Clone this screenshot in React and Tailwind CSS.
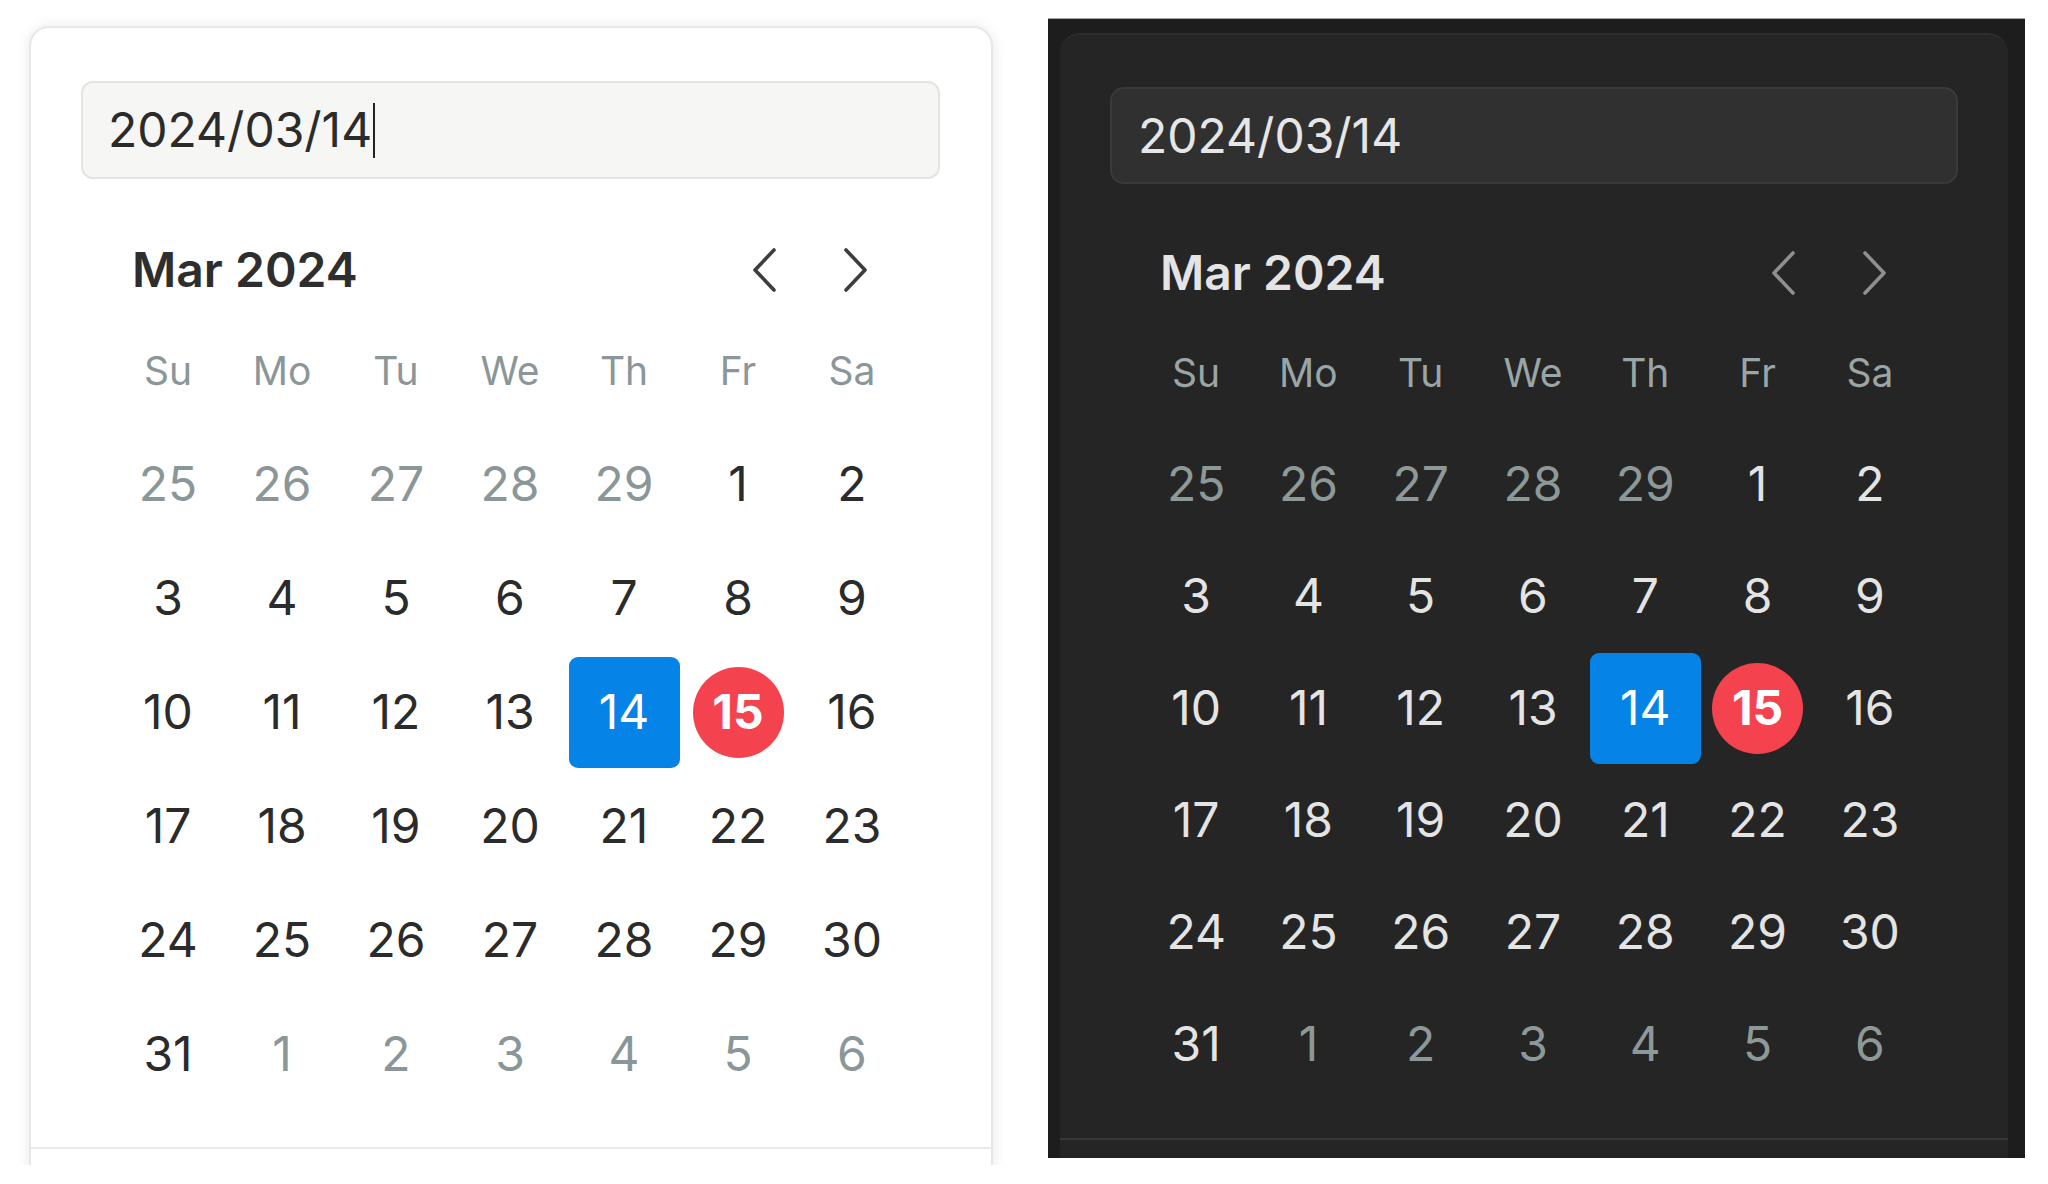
const weekdays = ['Su', 'Mo', 'Tu', 'We', 'Th', 'Fr', 'Sa']

// March 2024 grid, leading/trailing days flagged as outside
const days = [
  ...[25, 26, 27, 28, 29].map((d) => ({ d, out: true })),
  ...Array.from({ length: 31 }, (_, i) => ({ d: i + 1, out: false })),
  ...[1, 2, 3, 4, 5, 6].map((d) => ({ d, out: true })),
]

const themes = {
  light: {
    input: 'ml-[50px] mr-[51px] mt-[53px] h-[98px] rounded-[12px] border-2 border-[#e4e4e3] bg-[#f6f6f5] pl-[25px] text-[#2b2b2b]',
    title: 'text-[#2e2e2e]',
    header: 'mt-[61px] h-[60px] pl-[101px] pr-[120px]',
    grid: 'ml-[80px] mr-[82px] mt-[13px] auto-rows-[114px]',
    week: 'text-[#8a9697]',
    day: 'text-[#2b2b2b]',
    out: 'text-[#8a9697]',
    chevron: '#3d3d3d',
    divider: 'mt-[36px] border-[#e9e9e9]',
    caret: true,
  },
  dark: {
    input: 'ml-[50px] mr-[50px] mt-[52px] h-[97px] rounded-[14px] border-2 border-[#3a3a3a] bg-[#303030] pl-[26px] text-[#e6e6e6]',
    title: 'text-[#e4e4e4]',
    header: 'mt-[59px] h-[60px] pl-[100px] pr-[118px]',
    grid: 'ml-[80px] mr-[82px] mt-[13px] auto-rows-[112px]',
    week: 'text-[#9aa6a6]',
    day: 'text-[#e4e4e4]',
    out: 'text-[#8d9999]',
    chevron: '#8f8f8f',
    divider: 'mt-[38px] border-[#383838]',
    caret: false,
  },
}

function Chevron({ dir, color }) {
  return (
    <svg width="30" height="46" viewBox="0 0 30 46" fill="none">
      <path
        d={dir === 'left' ? 'M25 3 L6 23 L25 43' : 'M5 3 L24 23 L5 43'}
        stroke={color}
        strokeWidth="3.6"
        strokeLinecap="round"
        strokeLinejoin="round"
      />
    </svg>
  )
}

function Calendar({ mode }) {
  const t = themes[mode]
  return (
    <div className="font-['Inter',sans-serif]">
      <div className={`flex items-center text-[48px] leading-none ${t.input}`}>
        <span>2024/03/14</span>
        {t.caret && <span className="ml-[1px] h-[55px] w-[2px] bg-[#222]" />}
      </div>

      <div className={`flex items-center justify-between ${t.header}`}>
        <span className={`text-[48px] font-semibold leading-none ${t.title}`}>Mar 2024</span>
        <div className="flex items-center gap-[62px]">
          <Chevron dir="left" color={t.chevron} />
          <Chevron dir="right" color={t.chevron} />
        </div>
      </div>

      <div className={`grid grid-cols-7 ${t.grid}`}>
        {weekdays.map((w) => (
          <div key={w} className={`flex items-center justify-center text-[39px] leading-none ${t.week}`}>
            {w}
          </div>
        ))}
        {days.map((item, i) => {
          const selected = !item.out && item.d === 14
          const today = !item.out && item.d === 15
          return (
            <div key={i} className="flex items-center justify-center">
              {selected ? (
                <span className="flex h-[111px] w-[111px] items-center justify-center rounded-[9px] bg-[#0683e6] text-[48px] leading-none text-white">
                  14
                </span>
              ) : today ? (
                <span className="flex h-[91px] w-[91px] items-center justify-center rounded-full bg-[#f4434f] text-[48px] font-bold leading-none text-white">
                  15
                </span>
              ) : (
                <span className={`text-[48px] leading-none ${item.out ? t.out : t.day}`}>{item.d}</span>
              )}
            </div>
          )
        })}
      </div>

      <div className={`border-t-2 ${t.divider}`} />
    </div>
  )
}

export default function App() {
  return (
    <div className="flex h-[1184px] w-[2048px] items-start overflow-hidden bg-white">
      <div className="h-[1165px] w-[1048px] shrink-0 overflow-hidden pl-[29px] pr-[55px] pt-[26px]">
        <div className="h-[1200px] rounded-t-[20px] border-2 border-[#e7e7e7] bg-white shadow-[0_0_14px_rgba(0,0,0,0.09)]">
          <Calendar mode="light" />
        </div>
      </div>

      <div className="mt-[18px] flex h-[1140px] w-[977px] shrink-0 border-t border-[#a8a8a8] bg-[#1d1d1d] pl-[12px] pr-[17px] pt-[14px]">
        <div className="flex-1 rounded-t-[20px] border-t-2 border-[#2e2e2e] bg-[#252525]">
          <Calendar mode="dark" />
        </div>
      </div>
    </div>
  )
}
